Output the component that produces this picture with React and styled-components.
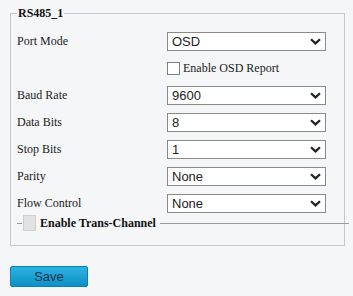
import React from 'react';
import styled, {createGlobalStyle} from 'styled-components';

const GlobalStyle = createGlobalStyle`
  html, body {
    margin: 0;
    padding: 0;
    background: #f4f6f8;
  }
  body {
    font-family: "Liberation Serif", "Times New Roman", serif;
    font-size: 12px;
    color: #222;
  }
`

const Page = styled.div`
  width: 353px;
  height: 296px;
  padding: 6px 0 0 10px;
  box-sizing: border-box;
  overflow: hidden;
`
const Group = styled.fieldset`
  width: 335px;
  box-sizing: border-box;
  margin: 0;
  padding: 12px 6px 14px 6px;
  border: 1px solid #c4c8cc;
  min-inline-size: 0;
`
const Legend = styled.legend`
  padding: 0 1px;
  margin-left: 0;
  font-weight: bold;
  font-size: 12px;
  line-height: 14px;
  color: #111;
`
const Rows = styled.div`
  display: flex;
  flex-direction: column;
  gap: 8px;
`
const Row = styled.div`
  display: flex;
  align-items: center;
  height: 19px;
`
const Label = styled.div`
  width: 150px;
  flex: none;
`
const SelectWrap = styled.div`
  position: relative;
  width: 159px;
  height: 19px;
`
const Select = styled.select`
  appearance: none;
  width: 100%;
  height: 100%;
  margin: 0;
  padding: 0 0 0 4px;
  box-sizing: border-box;
  border: 1px solid #8a8a8a;
  border-radius: 0;
  background: #fff;
  font-family: "Liberation Sans", Arial, sans-serif;
  font-size: 13px;
  color: #222;
  outline: none;
`
const Chevron = styled.svg`
  position: absolute;
  right: 5px;
  top: 6px;
  pointer-events: none;
`
const Check = styled.label`
  display: flex;
  align-items: center;
  gap: 3px;
`
const Box = styled.input`
  appearance: none;
  width: 13px;
  height: 13px;
  margin: 0;
  border: 1px solid #7f7f7f;
  background: #fff;
`
const SubGroup = styled.fieldset`
  width: 332px;
  box-sizing: border-box;
  margin: 2px 0 0 0;
  padding: 0;
  border: none;
  border-top: 1px solid #9c9c9c;
  min-inline-size: 0;
`
const SubLegend = styled.legend`
  padding: 0 4px 0 1px;
  margin-left: 5px;
  font-weight: bold;
  font-size: 12px;
  line-height: 16px;
  display: flex;
  align-items: center;
  gap: 4px;
  color: #111;
`
const SubBox = styled.span`
  display: inline-block;
  width: 11px;
  height: 14px;
  background: #e2e2e2;
  border: 1px solid #d0d0d0;
`
const Save = styled.button`
  margin-top: 20px;
  width: 78px;
  height: 21px;
  padding: 0;
  border: 1px solid #0b80b3;
  border-radius: 2px;
  background: linear-gradient(#2cb3e2, #0e90c4);
  color: #1b3450;
  font-family: "Liberation Sans", Arial, sans-serif;
  font-size: 13px;
  cursor: pointer;
`

const fields = [
  {label: 'Baud Rate', value: '9600'},
  {label: 'Data Bits', value: '8'},
  {label: 'Stop Bits', value: '1'},
  {label: 'Parity', value: 'None'},
  {label: 'Flow Control', value: 'None'},
]

function Dropdown({value}) {
  return (
    <SelectWrap>
      <Select defaultValue={value}>
        <option>{value}</option>
      </Select>
      <Chevron width="11" height="7" viewBox="0 0 11 7">
        <path d="M1 1.2 L5.5 5.4 L10 1.2" fill="none" stroke="#222" strokeWidth="2.2" />
      </Chevron>
    </SelectWrap>
  )
}

export default function App() {
  return (
    <Page>
      <GlobalStyle />
      <Group>
        <Legend>RS485_1</Legend>
        <Rows>
          <Row>
            <Label>Port Mode</Label>
            <Dropdown value="OSD" />
          </Row>
          <Row>
            <Label />
            <Check>
              <Box type="checkbox" />
              Enable OSD Report
            </Check>
          </Row>
          {fields.map(f => (
            <Row key={f.label}>
              <Label>{f.label}</Label>
              <Dropdown value={f.value} />
            </Row>
          ))}
        </Rows>
        <SubGroup>
          <SubLegend>
            <SubBox />
            Enable Trans-Channel
          </SubLegend>
        </SubGroup>
      </Group>
      <Save type="button">Save</Save>
    </Page>
  )
}
